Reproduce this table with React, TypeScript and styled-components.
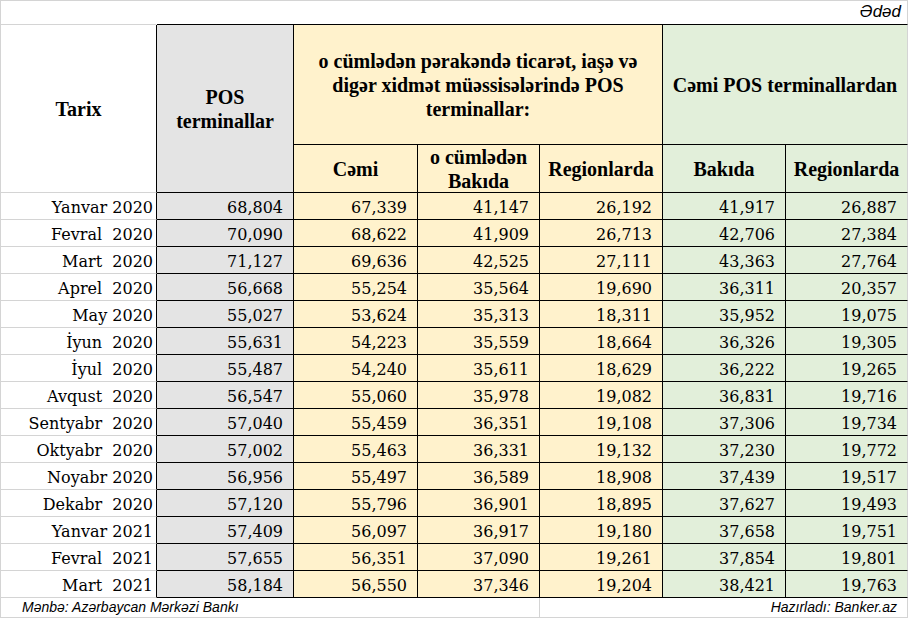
import React from "react";
import styled, { createGlobalStyle } from "styled-components";

const GRAY_LINE = "#d4d4d4";
const BLACK_LINE = "#000000";
const FILLS = {
  white: "#ffffff",
  gray: "#e4e4e4",
  yellow: "#fff2cc",
  green: "#e2efda",
} as const;
type Fill = keyof typeof FILLS;

const GlobalStyle = createGlobalStyle`
  html, body { margin: 0; padding: 0; background: #ffffff; }
  body { color: #000; }
`;

const Sheet = styled.div`
  display: grid;
  grid-template-columns: 156px 137px 124px 122px 123px 123px 122px;
  grid-template-rows: 24px 120px 48px repeat(15, 27px) 20px;
  width: max-content;
  border-top: 1px solid ${GRAY_LINE};
  border-left: 1px solid ${GRAY_LINE};
`;

interface CellProps {
  $fill?: Fill;
  $span?: number;
  $rows?: number;
  $right?: "black" | "gray" | "none";
  $bottom?: "black" | "gray" | "none";
}

const lineColor = (v?: "black" | "gray" | "none") =>
  v === "none" ? "transparent" : v === "gray" ? GRAY_LINE : BLACK_LINE;

const Cell = styled.div<CellProps>`
  box-sizing: border-box;
  display: flex;
  min-width: 0;
  overflow: visible;
  white-space: pre;
  background: ${(p) => FILLS[p.$fill ?? "white"]};
  grid-column: span ${(p) => p.$span ?? 1};
  grid-row: span ${(p) => p.$rows ?? 1};
  border-right: 1px solid ${(p) => lineColor(p.$right)};
  border-bottom: 1px solid ${(p) => lineColor(p.$bottom)};
`;

const UnitCell = styled(Cell)`
  align-items: flex-end;
  justify-content: flex-end;
  padding: 0 6px 2px 0;
  font-family: "Liberation Sans", Arial, sans-serif;
  font-style: italic;
  font-size: 17px;
  line-height: 20px;
`;

const HeadCell = styled(Cell)`
  align-items: center;
  justify-content: center;
  text-align: center;
  font-family: "Liberation Serif", "Times New Roman", serif;
  font-weight: bold;
  font-size: 20px;
  line-height: 24px;
`;

const DateCell = styled(Cell)`
  align-items: flex-end;
  justify-content: flex-end;
  padding: 0 3px 1px 0;
  font-family: "DejaVu Serif", serif;
  font-size: 16px;
  line-height: 20px;
`;

const NumCell = styled(Cell)`
  align-items: flex-end;
  justify-content: flex-end;
  padding: 0 10px 1px 0;
  font-family: "DejaVu Serif", serif;
  font-size: 16px;
  line-height: 20px;
`;

const NoteCell = styled(Cell)<{ $alignEnd?: boolean }>`
  align-items: flex-end;
  justify-content: ${(p) => (p.$alignEnd ? "flex-end" : "flex-start")};
  padding: ${(p) => (p.$alignEnd ? "0 10px 1px 0" : "0 0 1px 21px")};
  font-family: "Liberation Sans", Arial, sans-serif;
  font-style: italic;
  font-size: 14px;
  line-height: 18px;
`;

const rows: [string, number[]][] = [
  ["Yanvar 2020", [68804, 67339, 41147, 26192, 41917, 26887]],
  ["Fevral  2020", [70090, 68622, 41909, 26713, 42706, 27384]],
  ["Mart  2020", [71127, 69636, 42525, 27111, 43363, 27764]],
  ["Aprel  2020", [56668, 55254, 35564, 19690, 36311, 20357]],
  ["May 2020", [55027, 53624, 35313, 18311, 35952, 19075]],
  ["İyun  2020", [55631, 54223, 35559, 18664, 36326, 19305]],
  ["İyul  2020", [55487, 54240, 35611, 18629, 36222, 19265]],
  ["Avqust  2020", [56547, 55060, 35978, 19082, 36831, 19716]],
  ["Sentyabr  2020", [57040, 55459, 36351, 19108, 37306, 19734]],
  ["Oktyabr  2020", [57002, 55463, 36331, 19132, 37230, 19772]],
  ["Noyabr 2020", [56956, 55497, 36589, 18908, 37439, 19517]],
  ["Dekabr  2020", [57120, 55796, 36901, 18895, 37627, 19493]],
  ["Yanvar 2021", [57409, 56097, 36917, 19180, 37658, 19751]],
  ["Fevral  2021", [57655, 56351, 37090, 19261, 37854, 19801]],
  ["Mart  2021", [58184, 56550, 37346, 19204, 38421, 19763]],
];

const columnFill: Fill[] = ["gray", "yellow", "yellow", "yellow", "green", "green"];

const fmt = (n: number) => n.toLocaleString("en-US");

export default function App() {
  return (
    <>
      <GlobalStyle />
      <Sheet>
        <Cell $right="none" $bottom="gray" />
        <UnitCell $span={6} $right="gray" $bottom="black">
          Ədəd
        </UnitCell>

        <HeadCell $rows={2} $right="black" $bottom="gray">
          Tarix
        </HeadCell>
        <HeadCell $rows={2} $fill="gray">
          POS
          <br />
          terminallar
        </HeadCell>
        <HeadCell $span={3} $fill="yellow">
          o cümlədən pərakəndə ticarət, iaşə və
          <br />
          digər xidmət müəssisələrində POS
          <br />
          terminallar:
        </HeadCell>
        <HeadCell $span={2} $fill="green" $right="gray">
          Cəmi POS terminallardan
        </HeadCell>

        <HeadCell $fill="yellow">Cəmi</HeadCell>
        <HeadCell $fill="yellow">
          o cümlədən
          <br />
          Bakıda
        </HeadCell>
        <HeadCell $fill="yellow">Regionlarda</HeadCell>
        <HeadCell $fill="green">Bakıda</HeadCell>
        <HeadCell $fill="green" $right="gray">
          Regionlarda
        </HeadCell>

        {rows.map(([label, values]) => (
          <React.Fragment key={label}>
            <DateCell $right="black" $bottom="gray">
              {label}
            </DateCell>
            {values.map((v, i) => (
              <NumCell
                key={i}
                $fill={columnFill[i]}
                $right={i === values.length - 1 ? "gray" : "black"}
              >
                {fmt(v)}
              </NumCell>
            ))}
          </React.Fragment>
        ))}

        <NoteCell $span={4} $right="gray" $bottom="gray">
          Mənbə: Azərbaycan Mərkəzi Bankı
        </NoteCell>
        <NoteCell $span={3} $alignEnd $right="gray" $bottom="gray">
          Hazırladı: Banker.az
        </NoteCell>
      </Sheet>
    </>
  );
}
